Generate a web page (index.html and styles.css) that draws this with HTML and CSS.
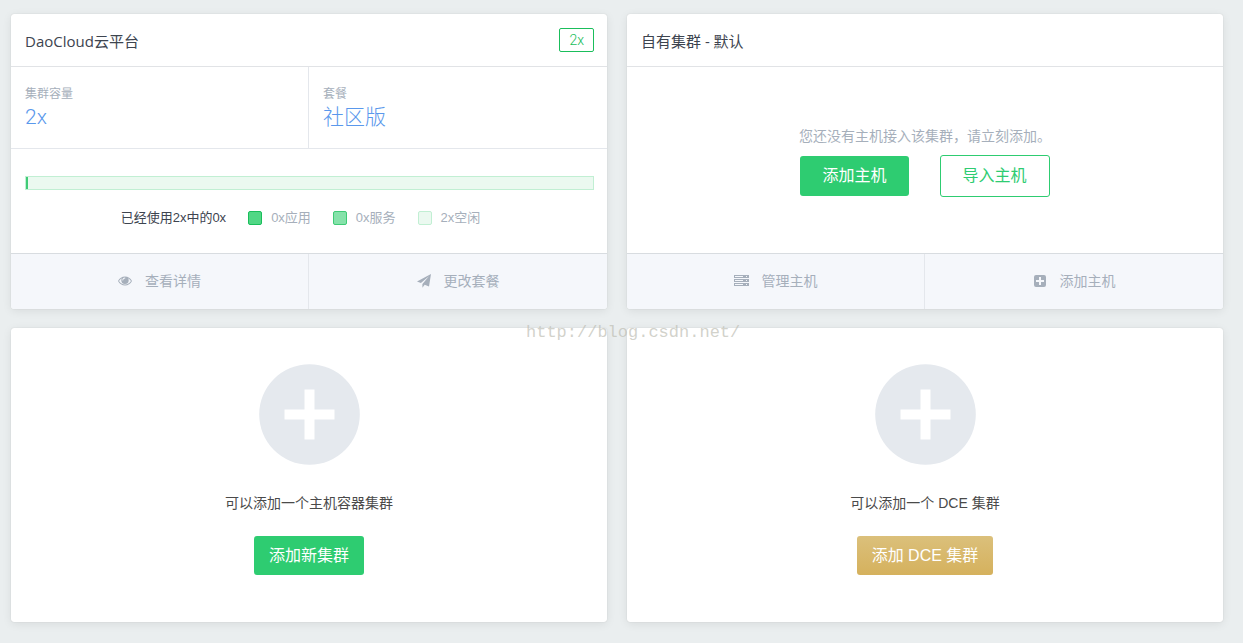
FILE: index.html
```html
<!DOCTYPE html>
<html lang="zh-CN">
<head>
<meta charset="utf-8">
<title>集群</title>
<link rel="stylesheet" href="styles.css">
</head>
<body>
<main class="clusters">
  <section class="card">
    <header class="card-header">
      <h2 class="card-title">DaoCloud云平台</h2>
      <span class="badge">2x</span>
    </header>
    <dl class="stats">
      <div class="stat"><dt>集群容量</dt><dd>2x</dd></div>
      <div class="stat"><dt>套餐</dt><dd>社区版</dd></div>
    </dl>
    <div class="usage">
      <div class="bar"><div class="bar-fill"></div></div>
      <ul class="legend">
        <li class="legend-total">已经使用2x中的0x</li>
        <li><span class="swatch swatch-app"></span>0x应用</li>
        <li><span class="swatch swatch-service"></span>0x服务</li>
        <li><span class="swatch swatch-free"></span>2x空闲</li>
      </ul>
    </div>
    <footer class="card-footer">
      <a class="action" href="#">
        <svg class="icon" viewBox="0 0 14 14" aria-hidden="true"><path fill="currentColor" fill-rule="evenodd" d="M7 2.5C10 2.500 12.500 4.200 14 7 12.500 9.800 10 11.500 7 11.500S1.500 9.800 0 7C1.500 4.200 4 2.500 7 2.500ZM3.900 4.300C2.700 4.900 1.700 5.800 1 7c1.300 2.200 3.500 3.500 6 3.500S11.700 9.200 13 7c-.7-1.200-1.700-2.100-2.900-2.700.4.600.6 1.200.6 1.900a3.700 3.700 0 0 1-7.400 0c0-.7.200-1.300.6-1.900ZM7 3.600a2.600 2.600 0 0 0-2.600 2.600.4.400 0 0 0 .8 0A1.800 1.800 0 0 1 7 4.400a.4.400 0 0 0 0-.8Z"/></svg>
        <span>查看详情</span>
      </a>
      <a class="action" href="#">
        <svg class="icon" viewBox="0 0 14 14" aria-hidden="true"><path fill="currentColor" d="M14 0 12 12.500 7.700 10.700 5.400 13.800V10L12 2.300 3.900 9.100 0 7.600Z"/></svg>
        <span>更改套餐</span>
      </a>
    </footer>
  </section>

  <section class="card">
    <header class="card-header">
      <h2 class="card-title">自有集群 - 默认</h2>
    </header>
    <div class="empty">
      <p class="empty-text">您还没有主机接入该集群，请立刻添加。</p>
      <div class="empty-buttons">
        <button class="btn btn-wide" type="button">添加主机</button>
        <button class="btn btn-wide btn-outline" type="button">导入主机</button>
      </div>
    </div>
    <footer class="card-footer">
      <a class="action" href="#">
        <svg class="icon icon-server" viewBox="0 0 15 14" aria-hidden="true"><path fill="currentColor" fill-rule="evenodd" d="M0 1h15v3H0ZM1 2v1h8V2ZM12 2v1h1V2ZM0 5h15v3H0ZM1 6v1h8V6ZM12 6v1h1V6ZM0 9h15v3H0ZM1 10v1h8v-1ZM12 10v1h1v-1Z"/></svg>
        <span>管理主机</span>
      </a>
      <a class="action" href="#">
        <svg class="icon" viewBox="0 0 14 14" aria-hidden="true"><path fill="currentColor" fill-rule="evenodd" d="M3 1h8a2 2 0 0 1 2 2v8a2 2 0 0 1-2 2H3a2 2 0 0 1-2-2V3a2 2 0 0 1 2-2ZM6 3v3H3v2h3v3h2V8h3V6H8V3Z"/></svg>
        <span>添加主机</span>
      </a>
    </footer>
  </section>

  <section class="card card-add">
    <svg class="plus" viewBox="0 0 101 101" aria-hidden="true"><circle cx="50.500" cy="50.500" r="50.300" fill="#e5e9ee"/><path fill="#fff" d="M45.500 25.500h10v20h20v10h-20v20h-10v-20h-20v-10h20Z"/></svg>
    <p class="add-text">可以添加一个主机容器集群</p>
    <button class="btn" type="button">添加新集群</button>
  </section>

  <section class="card card-add">
    <svg class="plus" viewBox="0 0 101 101" aria-hidden="true"><circle cx="50.500" cy="50.500" r="50.300" fill="#e5e9ee"/><path fill="#fff" d="M45.500 25.500h10v20h20v10h-20v20h-10v-20h-20v-10h20Z"/></svg>
    <p class="add-text">可以添加一个 DCE 集群</p>
    <button class="btn btn-gold" type="button">添加 DCE 集群</button>
  </section>
  <div class="watermark">http://blog.csdn.net/</div>
</main>
</body>
</html>
```
FILE: styles.css
```css
* {
  box-sizing: border-box;
}

body {
  margin: 0;
  background: #eaeeef;
  color: #3d444f;
  font: 14px/20px "Liberation Sans", "Noto Sans CJK SC", sans-serif;
}

h2, p, dl, dd, ul {
  margin: 0;
  padding: 0;
}

.clusters {
  position: relative;
  display: grid;
  grid-template-columns: 1fr 1fr;
  gap: 19px 20px;
  padding: 14px 20px 20px 11px;
}

.card {
  display: flex;
  flex-direction: column;
  background: #fff;
  border-radius: 3px;
  box-shadow: 0 0 1px rgba(0, 0, 0, 0.2), 0 2px 10px rgba(0, 0, 0, 0.08);
  overflow: hidden;
}

.card-header {
  display: flex;
  align-items: center;
  justify-content: space-between;
  height: 53px;
  padding: 0 13px 0 14px;
  border-bottom: 1px solid #e1e3e6;
}

.card-title {
  padding-top: 2px;
  font: 400 15px/22px "Open Sans", "Noto Sans CJK SC", sans-serif;
}

.badge {
  padding: 0 9px;
  border: 1px solid #1abe5b;
  border-radius: 2px;
  color: #1abe5b;
  font: 14px/22px Roboto, sans-serif;
  font-weight: 300;
}

.stats {
  display: grid;
  grid-template-columns: 1fr 1fr;
  border-bottom: 1px solid #e4e7ec;
}

.stat {
  padding: 18px 14px 17px;
}

.stat:first-child {
  border-right: 1px solid #e4e7ec;
}

.stat dt {
  color: #a6afbb;
  font-size: 12px;
  line-height: 18px;
}

.stat dd {
  color: #5a98ec;
  font: 300 21px/28px Roboto, "Noto Sans CJK SC", sans-serif;
}

.usage {
  padding: 27px 13px 25px 14px;
}

.bar {
  height: 14px;
  border: 1px solid #c1efd3;
  background: #ebf9f0;
}

.bar-fill {
  width: 2px;
  height: 100%;
  background: #3fcb76;
}

.legend {
  display: flex;
  justify-content: center;
  margin-top: 18px;
  list-style: none;
  color: #a6afbb;
  font-size: 13px;
}

.legend li {
  display: flex;
  align-items: center;
  margin-right: 22px;
}

.legend li:last-child {
  margin-right: 18px;
}

.legend .legend-total {
  color: #3d444f;
}

.swatch {
  width: 14px;
  height: 14px;
  margin-right: 9px;
  border: 1px solid;
  border-radius: 2px;
}

.swatch-app {
  background: #51d785;
  border-color: #1abe5b;
}

.swatch-service {
  background: #86e2aa;
  border-color: #3fcb76;
}

.swatch-free {
  background: #ebf9f0;
  border-color: #c1efd3;
}

.card-footer {
  display: grid;
  grid-template-columns: 1fr 1fr;
  margin-top: auto;
  border-top: 1px solid #d8dce0;
  background: #f5f7fb;
}

.action {
  display: flex;
  align-items: center;
  justify-content: center;
  gap: 13px;
  height: 55px;
  padding-bottom: 1px;
  color: #a6afbb;
  text-decoration: none;
}

.action:first-child {
  border-right: 1px solid #e4e7ec;
}

.icon {
  width: 14px;
  height: 14px;
}

.icon-server {
  width: 15px;
}

.empty {
  display: flex;
  flex: 1;
  flex-direction: column;
  align-items: center;
  justify-content: center;
  gap: 9px;
  padding-top: 2px;
}

.empty-text {
  color: #a6afbb;
}

.empty-buttons {
  display: flex;
  align-items: center;
  gap: 31px;
}

.btn {
  padding: 8px 15px;
  border: 0;
  border-radius: 3px;
  background: #2ecc71;
  color: #fff;
  font: 16px/23px "Liberation Sans", "Noto Sans CJK SC", sans-serif;
}

.btn-wide {
  padding: 8px 22px;
  line-height: 24px;
}

.btn-outline {
  border: 1px solid #2ecc71;
  background: #fff;
  color: #2ecc71;
}

.btn-gold {
  background: linear-gradient(#dbc07b, #d5b15d);
}

.card-add {
  align-items: center;
  padding: 36px 14px 47px;
}

.plus {
  width: 101px;
  height: 101px;
}

.add-text {
  margin: 28px 0 23px;
  color: #4a4a4a;
}

.watermark {
  position: absolute;
  top: 321px;
  left: 526px;
  color: rgba(190, 190, 180, 0.7);
  font: 17px/24px "Liberation Mono", monospace;
  pointer-events: none;
}
```
